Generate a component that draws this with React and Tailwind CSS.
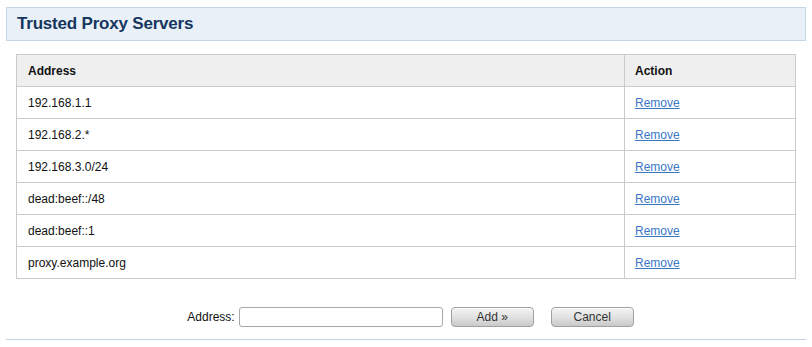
import React from "react"

const rows = [
  "192.168.1.1",
  "192.168.2.*",
  "192.168.3.0/24",
  "dead:beef::/48",
  "dead:beef::1",
  "proxy.example.org",
]

const Button = ({ children }) => (
  <button
    type="button"
    className="h-[20px] w-[83px] rounded-[4px] border border-[#a0a0a0] bg-gradient-to-b from-[#f4f4f4] via-[#e2e2e2] to-[#c9c9c9] text-[12px] leading-none text-[#333] shadow-[inset_0_1px_0_#fff]"
  >
    {children}
  </button>
)

export default function App() {
  return (
    <div className="w-[812px] h-[347px] bg-white font-['Liberation_Sans',Arial,sans-serif] text-[12px] text-[#111]">
      <div className="pt-[7px] px-[6px]">
        {/* Title bar */}
        <div className="h-[34px] w-[800px] border border-[#c3d5e8] bg-[#eaf0f7] flex items-center pl-[10px]">
          <h1 className="text-[17px] font-bold text-[#15365f] tracking-[-0.2px]">
            Trusted Proxy Servers
          </h1>
        </div>

        {/* Table */}
        <div className="mt-[13px] pl-[10px]">
          <table className="w-[780px] border-collapse">
            <thead>
              <tr className="h-[32px] bg-[#efefef]">
                <th className="border border-[#cbcbcb] text-left font-bold pl-[11px] w-[608px]">
                  Address
                </th>
                <th className="border border-[#cbcbcb] text-left font-bold pl-[10px]">
                  Action
                </th>
              </tr>
            </thead>
            <tbody>
              {rows.map((r) => (
                <tr key={r} className="h-[32px]">
                  <td className="border border-[#cbcbcb] pl-[11px]">{r}</td>
                  <td className="border border-[#cbcbcb] pl-[10px]">
                    <a href="#" className="text-[#3b78c4] underline">
                      Remove
                    </a>
                  </td>
                </tr>
              ))}
            </tbody>
          </table>
        </div>

        {/* Add form */}
        <div className="mt-[28px] flex items-center justify-center pl-[9px]">
          <label className="mr-[4px]">Address:</label>
          <input
            type="text"
            className="h-[20px] w-[204px] rounded-[3px] border border-[#a8a8a8] bg-white outline-none"
          />
          <div className="ml-[8px]">
            <Button>Add »</Button>
          </div>
          <div className="ml-[17px]">
            <Button>Cancel</Button>
          </div>
        </div>

        <div className="mt-[12px] h-px w-[800px] bg-[#c5d2e2]" />
      </div>
    </div>
  )
}
